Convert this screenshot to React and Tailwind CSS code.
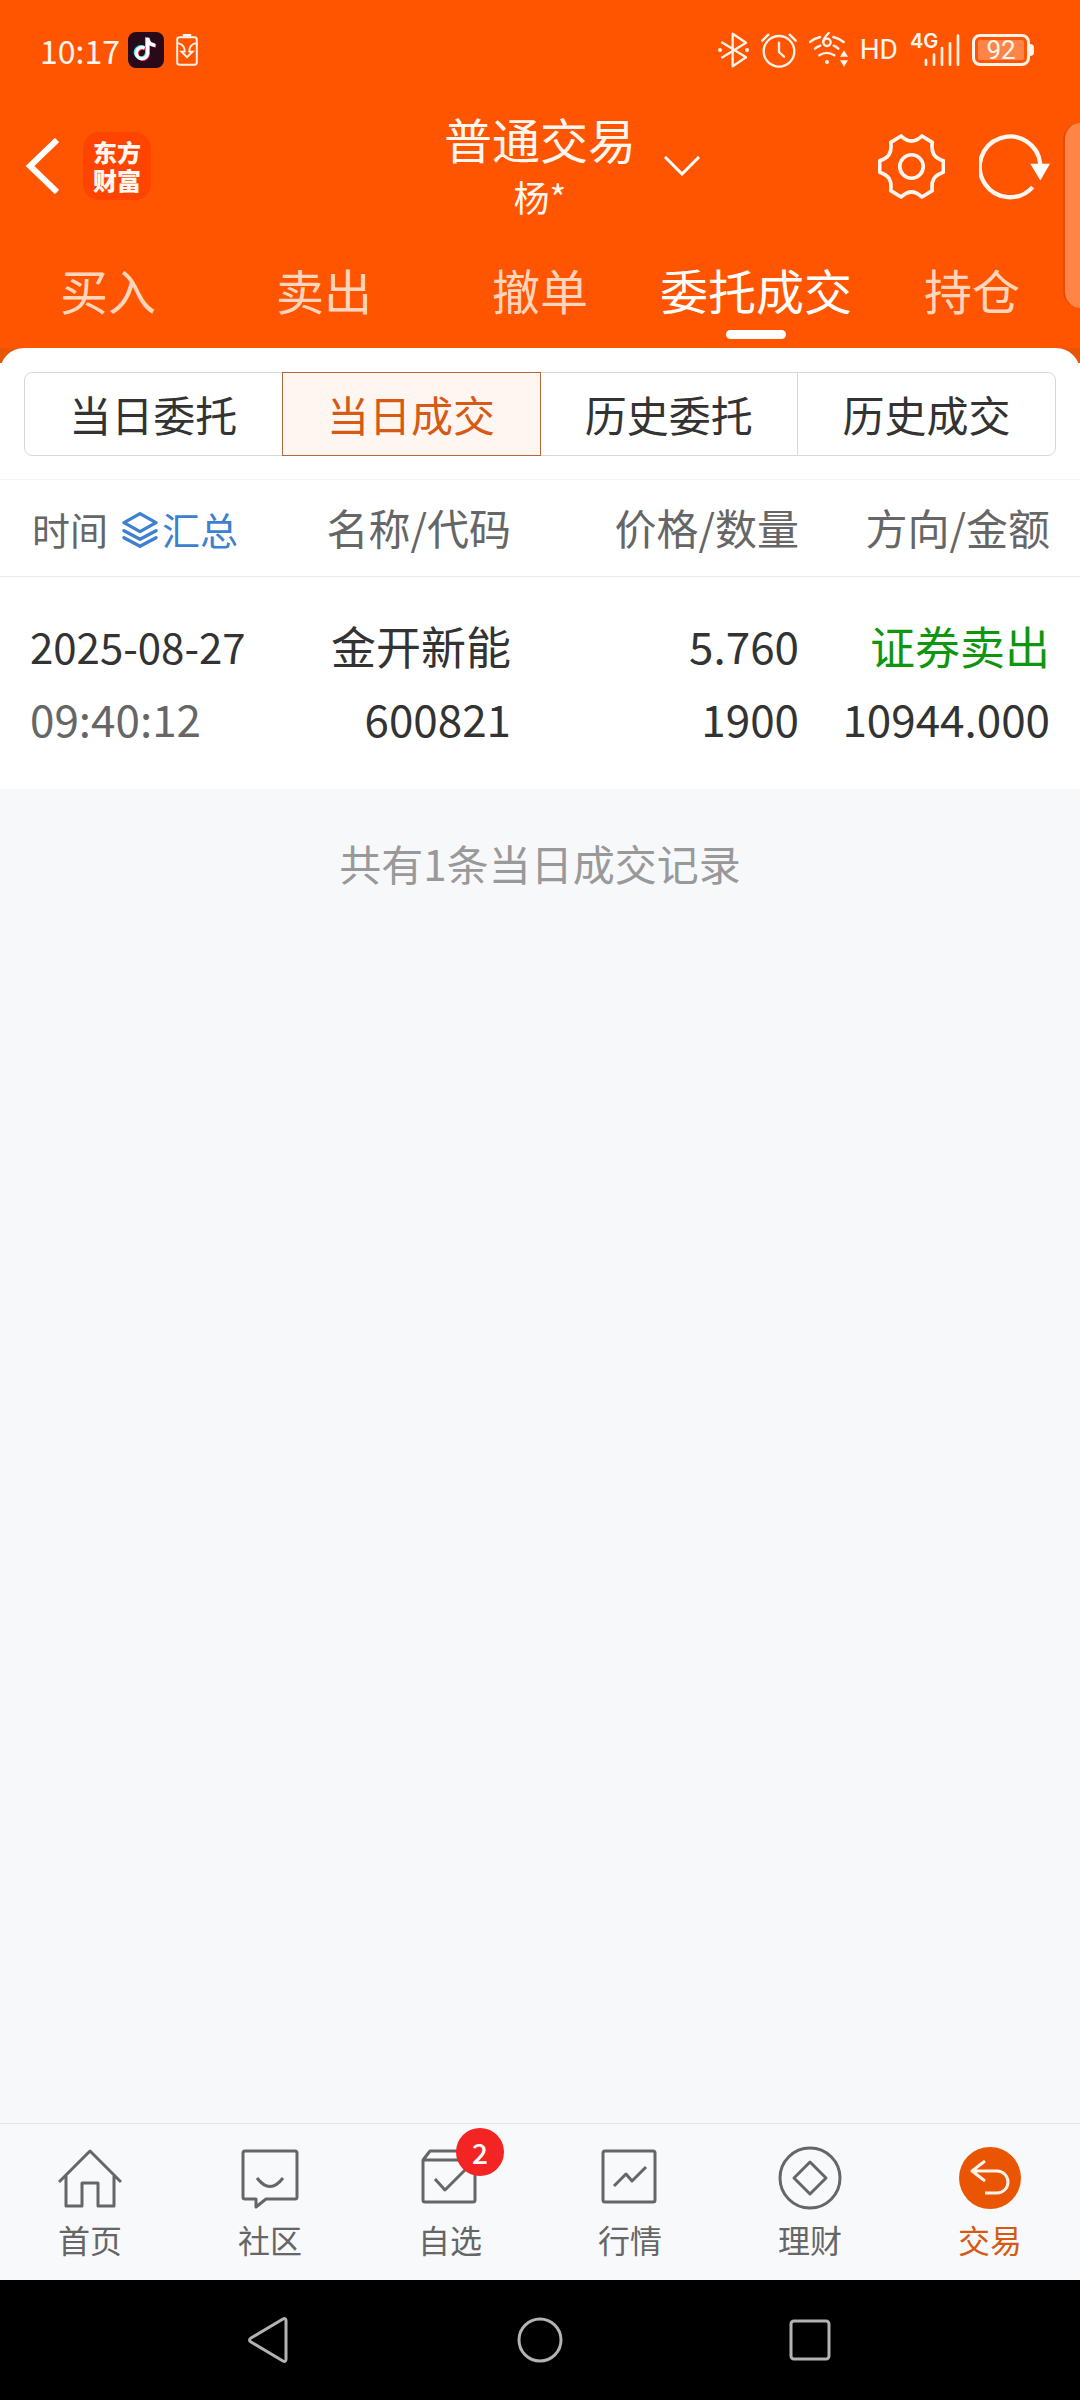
import React from "react";

const tabs = ["买入", "卖出", "撤单", "委托成交", "持仓"];
const segments = ["当日委托", "当日成交", "历史委托", "历史成交"];

function DouyinIcon() {
  return (
    <svg viewBox="0 0 108 108" className="size-9" aria-hidden="true">
      <rect width="108" height="108" rx="24" fill="#2a0a18" />
      <g fill="none" strokeWidth="10">
        <path d="M50 48a17 17 0 1 0 9 17V18c1 12 9 21 23 22" stroke="#25f4ee" transform="translate(-3 -2)" />
        <path d="M50 48a17 17 0 1 0 9 17V18c1 12 9 21 23 22" stroke="#fe2c55" transform="translate(2 2)" />
        <path d="M50 48a17 17 0 1 0 9 17V18c1 12 9 21 23 22" stroke="#fff" />
      </g>
    </svg>
  );
}

function BatterySaverIcon() {
  return (
    <svg viewBox="0 0 66 98" className="h-8 w-[22px]" fill="none" stroke="#fff3ea" strokeWidth="6" aria-hidden="true">
      <rect x="3" y="10" width="60" height="84" rx="7" />
      <path d="M20 4h26" strokeWidth="8" />
      <path d="M4 28c14 2 22 10 22 26h-10l17 17 17-17H40c0-16 8-24 22-26" strokeWidth="6" />
    </svg>
  );
}

function BluetoothIcon() {
  return (
    <svg viewBox="0 0 93 108" className="h-9 w-[31px]" fill="none" stroke="#fff3ea" strokeWidth="7" aria-hidden="true">
      <path d="M10 30l74 46-40 27V5l40 27-74 46" strokeLinejoin="round" />
      <circle cx="6" cy="54" r="6" fill="#fff3ea" stroke="none" />
      <circle cx="87" cy="54" r="6" fill="#fff3ea" stroke="none" />
    </svg>
  );
}

function AlarmIcon() {
  return (
    <svg viewBox="0 0 108 108" className="size-9" fill="none" stroke="#fff3ea" strokeWidth="7" strokeLinecap="round" aria-hidden="true">
      <circle cx="54" cy="58" r="46" />
      <path d="M54 32v28l15 14M4 26L22 8M86 8l18 18" />
    </svg>
  );
}

function WifiIcon() {
  return (
    <svg viewBox="0 0 117 108" className="h-9 w-[39px]" fill="none" stroke="#fff3ea" strokeWidth="7" strokeLinecap="round" aria-hidden="true">
      <path d="M3 30q14-11 30-15M73 15q16 4 31 15M18 50q7-6 16-9M74 41q8 3 14 9M31 70q22-15 45 0" />
      <circle cx="54" cy="90" r="6" fill="#fff3ea" stroke="none" />
      <path d="M59 3q-17 18-17 27" />
      <circle cx="54" cy="31" r="11" />
      <path d="M105 55l12 19H93zM105 104l12-19H93z" fill="#fff3ea" stroke="none" />
    </svg>
  );
}

function SignalIcon() {
  return (
    <span className="relative block h-9 w-[50px]">
      <svg viewBox="0 0 150 108" className="size-full" stroke="#fff3ea" strokeWidth="8" strokeLinecap="round" aria-hidden="true">
        <path d="M48 84v14M72 68v30M96 48v50M120 34v64M144 11v87" />
      </svg>
      <span className="absolute -top-px left-0 font-[Inter] text-xl leading-5 font-semibold">4G</span>
    </span>
  );
}

function BatteryIcon() {
  return (
    <span className="flex items-center">
      <span className="flex h-8 w-[58px] items-center rounded-lg border-3 border-[#fff3ea] p-[3px]">
        <span className="flex h-5 w-full items-center justify-center rounded-xs bg-[#ff8447] font-[Roboto] text-[26px] leading-5">92</span>
      </span>
      <span className="h-3 w-1 rounded-r-sm bg-[#fff3ea]" />
    </span>
  );
}

function GearIcon() {
  return (
    <svg viewBox="0 0 200 200" className="size-[67px]" fill="none" stroke="#fff7f0" strokeWidth="11" strokeLinejoin="round" aria-hidden="true">
      <path d="M69 9q31 30 62 0l31 19c-4 32 6 46 33 55v34c-27 9-37 23-33 55l-31 19q-31-30-62 0l-31-19c4-32-6-46-33-55V83c27-9 37-23 33-55z" />
      <circle cx="100" cy="100" r="35" />
    </svg>
  );
}

function RefreshIcon() {
  return (
    <svg viewBox="0 0 213 200" className="h-[67px] w-[71px]" fill="none" stroke="#fff7f0" strokeWidth="13" aria-hidden="true">
      <path d="M184 93a91 91 0 1 0-23 69" />
      <path d="M154 92h59l-29 50z" fill="#fff" stroke="none" />
    </svg>
  );
}

function LayersIcon() {
  return (
    <svg viewBox="0 0 108 108" className="mt-1 size-9" fill="none" stroke="#3d7fd0" strokeWidth="10" strokeLinejoin="round" strokeLinecap="round" aria-hidden="true">
      <path d="M54 5l48 27-48 27L6 32zM6 56l48 26 48-26M6 77l48 26 48-26" />
    </svg>
  );
}

function NavIcon({ children }) {
  return (
    <svg viewBox="0 0 64 64" className="size-16" fill="none" stroke="#666" strokeWidth="3" strokeLinejoin="round" aria-hidden="true">
      {children}
    </svg>
  );
}

const navItems = [
  {
    label: "首页",
    icon: (
      <NavIcon>
        <path d="M1 36L32 5l31 31M8 30v30h16V37h16v23h16V30" />
      </NavIcon>
    ),
  },
  {
    label: "社区",
    icon: (
      <NavIcon>
        <path d="M7 5h50a2 2 0 0 1 2 2v44a2 2 0 0 1-2 2H28l-10 8v-8H7a2 2 0 0 1-2-2V7a2 2 0 0 1 2-2z" />
        <path d="M19 32q13 17 26 0" />
      </NavIcon>
    ),
  },
  {
    label: "自选",
    badge: 2,
    icon: (
      <NavIcon>
        <path d="M5 14v40a2 2 0 0 0 2 2h48a2 2 0 0 0 2-2V14zl7-9h38l7 9" />
        <path d="M17 33l10 11 21-21" />
      </NavIcon>
    ),
  },
  {
    label: "行情",
    icon: (
      <NavIcon>
        <rect x="5" y="5" width="52" height="51" rx="2" />
        <path d="M16 40l12-12 6 7 14-14" />
      </NavIcon>
    ),
  },
  {
    label: "理财",
    icon: (
      <NavIcon>
        <circle cx="32" cy="32" r="30" />
        <path d="M32 16l16 16-16 16-16-16z" />
      </NavIcon>
    ),
  },
  {
    label: "交易",
    active: true,
    icon: (
      <NavIcon>
        <circle cx="32" cy="32" r="31" fill="#ea5504" stroke="none" />
        <path d="M27 15L14 25l13 10M14 25h25a11 11 0 0 1 0 22H27" stroke="#fff3ea" />
      </NavIcon>
    ),
  },
];

export default function App() {
  return (
    <div className="flex min-h-screen flex-col bg-[#f7f8fa] font-['Noto_Sans_CJK_SC',sans-serif] text-[#333]">
      <header className="relative bg-[#ff5500] text-[#fff7f0]">
        <div className="flex h-[100px] items-center justify-between pr-[46px] pl-10">
          <div className="flex items-center gap-2">
            <span className="text-[32px]">10:17</span>
            <div className="flex items-center gap-3">
              <DouyinIcon />
              <BatterySaverIcon />
            </div>
          </div>
          <div className="flex items-center gap-3">
            <BluetoothIcon />
            <AlarmIcon />
            <WifiIcon />
            <span className="font-[Roboto] text-[28px]">HD</span>
            <SignalIcon />
            <BatteryIcon />
          </div>
        </div>

        <div className="grid h-[132px] grid-cols-[1fr_auto_1fr] items-center">
          <div className="flex items-center gap-6 pl-6">
            <button type="button" aria-label="返回">
              <svg viewBox="0 0 35 56" className="h-14 w-[35px]" fill="none" stroke="#fff" strokeWidth="6" aria-hidden="true">
                <path d="M33 2L6 28l27 26" />
              </svg>
            </button>
            <a href="#home" className="flex size-[68px] items-center justify-center rounded-2xl bg-[#ff4400] text-2xl leading-7 font-black">
              <span className="w-12 break-all">东方财富</span>
            </a>
          </div>
          <button type="button" className="relative flex flex-col items-center">
            <span className="text-5xl leading-[60px]">普通交易</span>
            <span className="text-4xl leading-[56px]">杨*</span>
            <svg viewBox="0 0 36 20" className="absolute top-12 left-full ml-7 h-5 w-9" fill="none" stroke="#fff" strokeWidth="3" aria-hidden="true">
              <path d="M1 1l17 17L35 1" />
            </svg>
          </button>
          <div className="flex items-center justify-end gap-[34px] pr-[30px]">
            <button type="button" aria-label="设置"><GearIcon /></button>
            <button type="button" aria-label="刷新"><RefreshIcon /></button>
          </div>
        </div>

        <nav className="grid h-[116px] grid-cols-5">
          {tabs.map((t) => (
            <button
              key={t}
              type="button"
              className={
                t === "委托成交"
                  ? "relative pb-0.5 text-5xl whitespace-nowrap text-white"
                  : "pb-0.5 text-5xl whitespace-nowrap text-[#ffd5bd]"
              }
            >
              {t}
              {t === "委托成交" && (
                <span className="absolute bottom-[9px] left-1/2 h-[9px] w-[60px] -translate-x-1/2 rounded-full bg-white" />
              )}
            </button>
          ))}
        </nav>
        <div className="absolute top-[123px] right-0 h-[185px] w-[17px] rounded-l-3xl border-l-2 border-[#e05008] bg-[#ff8447]" />
      </header>

      <main className="flex grow flex-col">
        <div className="bg-linear-to-b from-[#e85506] from-[15px] to-white to-[15px]">
          <div className="rounded-t-3xl bg-white px-6 pt-6 pb-[23px]">
            <div className="flex">
              {segments.map((s) => (
                <button
                  key={s}
                  type="button"
                  className={
                    s === "当日成交"
                      ? "z-10 -ml-px h-[84px] grow basis-0 border border-[#b0683c] bg-[#fff6f2] pb-0.5 text-[42px] text-[#d65a16]"
                      : "-ml-px h-[84px] grow basis-0 border border-[#d8d8d8] pb-0.5 text-[42px] first:ml-0 first:rounded-l-lg last:rounded-r-lg"
                  }
                >
                  {s}
                </button>
              ))}
            </div>
          </div>
        </div>

        <table className="w-full table-fixed border-t border-[#f5f5f5] bg-white">
          <colgroup>
            <col />
            <col className="w-52" />
            <col className="w-72" />
            <col className="w-[281px]" />
          </colgroup>
          <thead>
            <tr className="h-[97px] border-b border-[#ebebeb] text-right text-[42px] whitespace-nowrap text-[#666]">
              <th className="pl-8 text-left font-normal">
                <div className="flex items-center gap-3.5 text-[38px]">
                  <span>时间</span>
                  <button type="button" className="flex items-center gap-1 text-[#3d7fd0]">
                    <LayersIcon />
                    汇总
                  </button>
                </div>
              </th>
              <th className="pb-1 font-normal">名称/代码</th>
              <th className="pb-1 font-normal">价格/数量</th>
              <th className="pr-[30px] pb-1 font-normal">方向/金额</th>
            </tr>
          </thead>
          <tbody>
            <tr className="h-[212px] text-right text-[45px] leading-[73px] whitespace-nowrap">
              <td className="pb-0.5 pl-[30px] text-left text-[42px]">
                <div>2025-08-27</div>
                <div className="text-[44px] text-[#666]">09:40:12</div>
              </td>
              <td className="pb-0.5">
                <div>金开新能</div>
                <div className="text-[44px]">600821</div>
              </td>
              <td className="pb-0.5">
                <div className="text-[44px]">5.760</div>
                <div className="text-[44px]">1900</div>
              </td>
              <td className="pr-[30px] pb-0.5">
                <div className="text-[#0f960f]">证券卖出</div>
                <div className="text-[44px]">10944.000</div>
              </td>
            </tr>
          </tbody>
        </table>
        <p className="py-[42px] text-center text-[42px] leading-[64px] text-[#999]">共有1条当日成交记录</p>
      </main>

      <nav className="grid h-[157px] grid-cols-6 border-t border-[#e3e5e8] bg-[#f8f9fb]">
        {navItems.map((n) => (
          <a
            key={n.label}
            href={"#" + n.label}
            className={
              n.active
                ? "flex flex-col items-center pt-[22px] text-[32px] leading-[58px] text-[#d65a16]"
                : "flex flex-col items-center pt-[22px] text-[32px] leading-[58px] text-[#666]"
            }
          >
            <span className="relative">
              {n.icon}
              {n.badge && (
                <span className="absolute -top-[18px] left-[38px] flex size-12 items-center justify-center rounded-full bg-[#f22424] text-[28px] leading-none font-medium text-white">
                  {n.badge}
                </span>
              )}
            </span>
            {n.label}
          </a>
        ))}
      </nav>

      <div className="grid h-[120px] grid-cols-3 place-items-center bg-black px-[12.5%]">
        <button type="button" aria-label="系统返回">
          <svg viewBox="0 0 48 48" className="size-12" fill="none" stroke="#b3b3b3" strokeWidth="3" strokeLinejoin="round" aria-hidden="true">
            <path d="M37 3c2-1 3 0 3 2v38c0 2-1 3-3 2L5 26c-2-1-2-3 0-4z" />
          </svg>
        </button>
        <button type="button" aria-label="主屏幕">
          <svg viewBox="0 0 48 48" className="size-12" fill="none" stroke="#b3b3b3" strokeWidth="3" aria-hidden="true">
            <circle cx="24" cy="24" r="21" />
          </svg>
        </button>
        <button type="button" aria-label="最近任务">
          <svg viewBox="0 0 48 48" className="size-12" fill="none" stroke="#b3b3b3" strokeWidth="3" aria-hidden="true">
            <rect x="5" y="5" width="38" height="38" rx="3" />
          </svg>
        </button>
      </div>
    </div>
  );
}
